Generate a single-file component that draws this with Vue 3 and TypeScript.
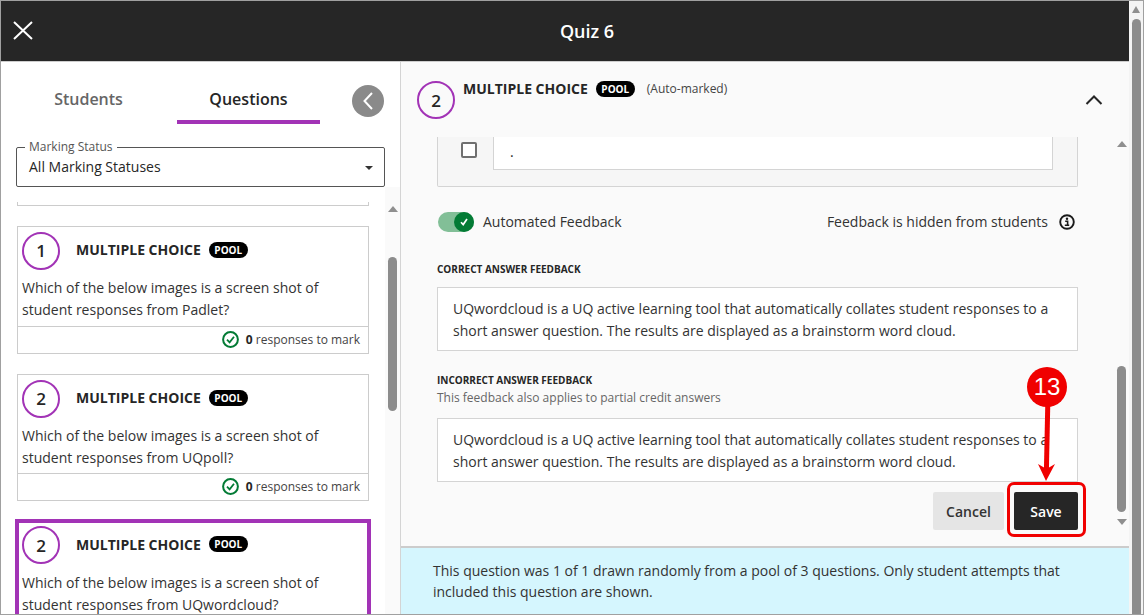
<script setup lang="ts">
interface Q { n: number; title: string; text: string[]; active?: boolean }
const cards: Q[] = [
  { n: 1, title: 'MULTIPLE CHOICE', text: ['Which of the below images is a screen shot of', 'student responses from Padlet?'] },
  { n: 2, title: 'MULTIPLE CHOICE', text: ['Which of the below images is a screen shot of', 'student responses from UQpoll?'] },
  { n: 2, title: 'MULTIPLE CHOICE', text: ['Which of the below images is a screen shot of', 'student responses from UQwordcloud?'], active: true },
]
</script>

<template>
  <div class="frame">
    <div class="page">
      <header class="topbar">
        <svg class="close" width="20" height="20" viewBox="0 0 20 20"><path d="M1 1 L19 18 M19 1 L1 18" stroke="#fff" stroke-width="2" fill="none"/></svg>
        <h1>Quiz 6</h1>
      </header>
      <div class="body">
        <aside class="left">
          <div class="tabs">
            <div class="tab first-tab">Students</div>
            <div class="tab on">Questions</div>
            <button class="back"><svg width="12" height="20" viewBox="0 0 12 20"><path d="M10 2 L2.5 10 L10 18" stroke="#fff" stroke-width="2" fill="none"/></svg></button>
          </div>
          <div class="select">
            <span class="legend">Marking Status</span>
            <span class="value">All Marking Statuses</span>
            <i class="caret"></i>
          </div>
          <div class="listwrap">
            <div class="list">
              <div class="stub"></div>
              <div v-for="(c, i) in cards" :key="i" class="card" :class="{ active: c.active, tight: i === 1 }">
                <div class="chead">
                  <span class="num">{{ c.n }}</span>
                  <b class="ctitle">{{ c.title }}</b>
                  <span class="pool">POOL</span>
                </div>
                <p class="ctext"><span v-for="l in c.text" :key="l">{{ l }}<br></span></p>
                <div v-if="!c.active" class="cfoot">
                  <svg width="17" height="17" viewBox="0 0 17 17"><circle cx="8.5" cy="8.5" r="7.4" stroke="#037b35" stroke-width="2" fill="none"/><path d="M5 8.7 L7.6 11.3 L12 5.8" stroke="#037b35" stroke-width="1.8" fill="none"/></svg>
                  <span><b>0</b> responses to mark</span>
                </div>
              </div>
            </div>
            <div class="sb leftsb">
              <i class="up"></i>
              <i class="thumb"></i>
            </div>
          </div>
        </aside>
        <main class="right">
          <div class="rhead">
            <span class="num">2</span>
            <b class="rtitle">MULTIPLE CHOICE</b>
            <span class="pool">POOL</span>
            <span class="auto">(Auto-marked)</span>
            <svg class="chev" width="18" height="12" viewBox="0 0 18 12"><path d="M1.5 10 L9 2.5 L16.5 10" stroke="#262626" stroke-width="2" fill="none"/></svg>
          </div>
          <div class="scroll">
            <div class="content">
              <div class="optbox">
                <span class="check"></span>
                <div class="optinput">.</div>
              </div>
              <div class="fbrow">
                <span class="toggle"><span class="knob"><svg width="10" height="10" viewBox="0 0 10 10"><path d="M2 5.2 L4.2 7.6 L8 2" stroke="#fff" stroke-width="1.7" fill="none"/></svg></span></span>
                <span class="fblabel">Automated Feedback</span>
                <span class="hidden">Feedback is hidden from students</span>
                <svg class="info" width="16" height="16" viewBox="0 0 16 16"><circle cx="8" cy="8" r="6.8" stroke="#1a1a1a" stroke-width="1.9" fill="none"/><circle cx="8" cy="4.8" r="1.2" fill="#1a1a1a"/><path d="M6.2 7.2 H8.6 V11 M5.8 11.3 H10.2" stroke="#1a1a1a" stroke-width="1.6" fill="none"/></svg>
              </div>
              <h3 class="lab first">CORRECT ANSWER FEEDBACK</h3>
              <div class="fbbox">UQwordcloud is a UQ active learning tool that automatically collates student responses to a<br>short answer question. The results are displayed as a brainstorm word cloud.</div>
              <h3 class="lab second">INCORRECT ANSWER FEEDBACK</h3>
              <p class="sub">This feedback also applies to partial credit answers</p>
              <div class="fbbox">UQwordcloud is a UQ active learning tool that automatically collates student responses to a<br>short answer question. The results are displayed as a brainstorm word cloud.</div>
              <div class="actions">
                <button class="cancel">Cancel</button>
                <button class="save">Save</button>
              </div>
            </div>
            <div class="sb rightsb">
              <i class="up"></i>
              <i class="thumb"></i>
              <i class="down"></i>
            </div>
          </div>
          <div class="banner">This question was 1 of 1 drawn randomly from a pool of 3 questions. Only student attempts that<br>included this question are shown.</div>
        </main>
      </div>
    </div>
    <div class="sb outer">
      <i class="up"></i>
      <i class="thumb"></i>
    </div>
    <!-- annotation overlay -->
    <div class="hl"></div>
    <svg class="arrow" width="34" height="100" viewBox="0 0 34 100"><path d="M18 8 L16.4 86" stroke="#f00000" stroke-width="5" fill="none"/><path d="M8 79 L16 96 L25 79 L16.5 84 Z" fill="#f00000"/></svg>
    <div class="marker">13</div>
  </div>
</template>

<style>
html, body { margin: 0; padding: 0; overflow: hidden; }
</style>

<style scoped>
* { box-sizing: border-box; }
.frame {
  position: relative; width: 1144px; height: 615px; overflow: hidden; display: flex;
  border: 1px solid #a0a0a0; background: #fff;
  font-family: "Open Sans", "Noto Sans", sans-serif; color: #262626;
}
.page { width: 1128px; height: 100%; display: flex; flex-direction: column; flex: none; }
.topbar { height: 61px; flex: none; background: #262626; position: relative; display: flex; align-items: center; justify-content: center; border-bottom: 1px solid #cdcdcd; padding-left: 44px; }
.topbar h1 { margin: 0; font-size: 18px; font-weight: 600; color: #fff; }
.close { position: absolute; left: 12px; top: 20px; }
.body { flex: 1; display: flex; min-height: 0; }
.left { width: 399px; flex: none; display: flex; flex-direction: column; background: #fff; }
.tabs { height: 62px; flex: none; display: flex; position: relative; padding-left: 17px; }
.tab { width: 143px; height: 62px; text-align: center; font-size: 16px; font-weight: 600; color: #666; padding-top: 24px; line-height: 26px; }
.first-tab { margin-left: -1px; margin-right: 1px; }
.tab.on { color: #262626; border-bottom: 4px solid #a233b6; margin-left: 16px; }
.back { position: absolute; left: 351px; top: 23px; width: 32px; height: 32px; border-radius: 50%; background: #8a8a8a; border: 0; padding: 0; display: flex; align-items: center; justify-content: center; }
.select { margin: 23px 0 0 15px; width: 369px; height: 40px; flex: none; border: 1px solid #555; border-radius: 2px; position: relative; }
.legend { position: absolute; left: 8px; top: -9px; background: #fff; padding: 0 4px; font-size: 12px; line-height: 16px; color: #555; }
.value { position: absolute; left: 12px; top: 9px; font-size: 14px; line-height: 20px; color: #262626; }
.caret { position: absolute; right: 11px; top: 18px; width: 0; height: 0; border: 4px solid transparent; border-top: 4px solid #333; border-bottom: 0; }
.listwrap { flex: 1; min-height: 0; position: relative; display: flex; }
.list { flex: 1; overflow: hidden; padding: 15px 0 0 16px; }
.stub { width: 352px; height: 4px; border: 1px solid #ccc; border-top: 0; margin-bottom: 20px; }
.card { width: 352px; height: 128px; border: 1px solid #ccc; margin-bottom: 20px; position: relative; display: flex; flex-direction: column; }
.card.tight { height: 127px; }
.card.active { width: 356px; margin-left: -2px; height: 130px; border: 4px solid #a233b6; margin-top: -2px; border-bottom: 0; }
.chead { display: flex; align-items: center; padding: 4px 0 0 4px; height: 43px; flex: none; }
.card.active .chead { padding: 3px 0 0 3px; height: 41px; }
.num { width: 38px; height: 38px; border-radius: 50%; border: 2px solid #a233b6; display: flex; align-items: center; justify-content: center; font-size: 17px; font-weight: 600; flex: none; color: #262626; }
.ctitle { margin: 0 8px 2px 16px; font-size: 14px; font-weight: 700; line-height: 20px; }
.card.active .ctitle { margin-bottom: 0; }
.pool { background: #000; color: #fff; font-size: 10px; font-weight: 700; width: 39px; height: 16px; border-radius: 8px; display: flex; align-items: center; justify-content: center; flex: none; margin-bottom: 2px; }
.ctext { margin: 7px 0 0 4px; font-size: 14px; line-height: 22px; color: #333; height: 44px; white-space: nowrap; flex: none; }
.card.active .ctext { margin: 8px 0 0 3px; }
.cfoot { margin-top: 5px; border-top: 1px solid #ccc; flex: 1; display: flex; align-items: center; justify-content: flex-end; gap: 7px; padding: 0 8px 2px 0; font-size: 12px; color: #444; }
.card.tight .cfoot { margin-top: 4px; }
.cfoot b { font-size: 12px; font-weight: 700; color: #262626; }
.sb { position: relative; flex: none; background: #fafafa; }
.sb i { display: block; position: absolute; }
.sb .up { width: 0; height: 0; border: 5px solid transparent; border-bottom: 6px solid #8f8f8f; border-top: 0; }
.sb .down { width: 0; height: 0; border: 5px solid transparent; border-top: 6px solid #8f8f8f; border-bottom: 0; }
.sb .thumb { background: #8c8c8c; border-radius: 5px; width: 9px; }
.leftsb { width: 15px; height: 100%; }
.leftsb .up { left: 3px; top: 19px; }
.leftsb .thumb { left: 3px; top: 70px; height: 154px; }
.right { flex: 1; min-width: 0; display: flex; flex-direction: column; background: #fafafa; border-left: 1px solid #d4d4d4; }
.rhead { height: 75px; flex: none; position: relative; display: flex; align-items: flex-start; padding: 19px 0 0 16px; }
.rtitle { margin: 0 8px; font-size: 14px; font-weight: 700; line-height: 16px; }
.auto { margin-left: 12px; font-size: 12px; line-height: 16px; color: #444; }
.chev { position: absolute; left: 684px; top: 32px; }
.scroll { flex: 1; min-height: 0; display: flex; position: relative; }
.content { width: 715px; flex: none; padding-left: 36px; overflow: hidden; }
.optbox { width: 641px; height: 50px; background: #f6f6f6; border: 1px solid #d4d4d4; border-top: 0; border-radius: 0 0 2px 2px; display: flex; padding-left: 23px; align-items: flex-start; }
.check { width: 16px; height: 16px; margin-top: 5px; border: 2px solid #707070; border-radius: 2px; background: #fff; flex: none; }
.optinput { margin-left: 16px; width: 560px; height: 33px; background: #fff; border: 1px solid #d4d4d4; border-top: 0; padding: 5px 0 0 16px; font-size: 14px; line-height: 20px; }
.fbrow { display: flex; align-items: center; height: 20px; margin-top: 25px; width: 641px; }
.toggle { width: 36px; height: 20px; border-radius: 10px; background: #82bf97; position: relative; flex: none; margin-left: 1px; }
.knob { position: absolute; right: 0; top: 0; width: 20px; height: 20px; background: #037b35; border-radius: 50%; display: flex; align-items: center; justify-content: center; }
.fblabel { margin: 0 0 2px 9px; font-size: 14px; color: #333; }
.hidden { margin: 0 0 2px auto; font-size: 14px; color: #333; }
.info { margin-left: 11px; margin-right: 3px; flex: none; }
.lab { margin: 0; font-size: 10px; font-weight: 700; line-height: 14px; color: #262626; }
.lab.first { margin-top: 30px; }
.lab.second { margin-top: 22px; }
.sub { margin: 4px 0 0; font-size: 12px; line-height: 14px; color: #666; }
.fbbox { width: 641px; height: 64px; margin-top: 11px; background: #fff; border: 1px solid #d4d4d4; padding: 10px 0 0 15px; font-size: 14px; line-height: 22px; color: #333; white-space: nowrap; overflow: hidden; }
.sub + .fbbox { margin-top: 13px; }
.actions { display: flex; justify-content: flex-end; gap: 10px; width: 641px; margin-top: 10px; }
.actions button { height: 38px; border: 0; border-radius: 2px; font-family: inherit; font-size: 14px; font-weight: 600; padding: 0; }
.cancel { width: 71px; background: #e5e5e5; color: #333; }
.save { width: 64px; background: #262626; color: #fff; }
.rightsb { width: 15px; margin-left: -1px; }
.rightsb .up { left: 2px; top: 4px; }
.rightsb .thumb { left: 2px; top: 229px; height: 146px; }
.rightsb .down { left: 2px; top: 382px; }
.banner { height: 68px; flex: none; background: #d5f6fe; border-top: 2px solid #ccc; padding: 12px 0 0 32px; font-size: 14px; line-height: 21px; color: #333; }
.outer { width: 14px; height: 100%; background: #f4f4f4; }
.outer .up { left: 3px; top: 5px; border-width: 0 4.5px 7px; }
.outer .thumb { left: 3px; top: 18px; height: 600px; }
.hl { position: absolute; left: 1006px; top: 481px; width: 79px; height: 55px; border: 3px solid #f00000; border-radius: 7px; }
.marker { position: absolute; left: 1026px; top: 366px; width: 40px; height: 40px; border-radius: 50%; background: #f00000; color: #fff; font-family: "Liberation Sans", sans-serif; font-size: 24px; line-height: 40px; text-align: center; }
.arrow { position: absolute; left: 1029px; top: 384px; }
</style>
